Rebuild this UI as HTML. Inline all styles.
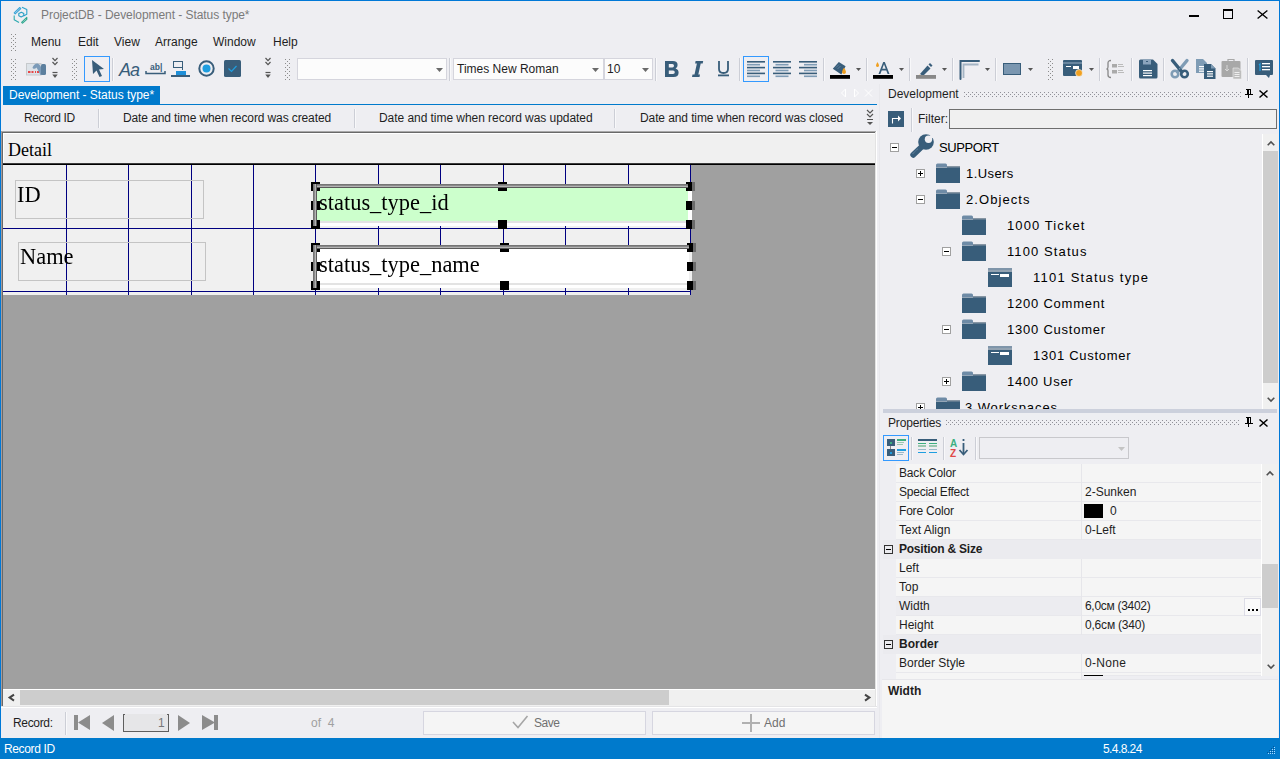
<!DOCTYPE html>
<html><head><meta charset="utf-8">
<style>
*{margin:0;padding:0;box-sizing:border-box}
html,body{width:1280px;height:759px;overflow:hidden;background:#eeeef2;font-family:"Liberation Sans",sans-serif;font-size:12px;color:#1e1e1e}
.a{position:absolute}
.t{position:absolute;white-space:nowrap;line-height:1}
.sx{transform:scaleX(0.935);transform-origin:0 0}
.serif{font-family:"Liberation Serif",serif;color:#000}
.grip{position:absolute;width:6px;background-image:radial-gradient(circle,#8a8a8a 0.6px,transparent 0.9px);background-size:3px 3px}
.sep{position:absolute;width:1px;background:#ccced6;box-shadow:1px 0 #f8f8fa}
.dd{position:absolute;width:5px;height:3px;background:#555;clip-path:polygon(0 0,100% 0,50% 100%)}
.ddc{position:absolute;width:7px;height:4px;background:#6a6a6a;clip-path:polygon(0 0,100% 0,50% 100%)}
svg{position:absolute;overflow:visible}
.vl{position:absolute;top:165px;width:1px;height:130px;background:#000080}
.hl{position:absolute;left:3px;width:688px;height:1px;background:#000080}
.h{position:absolute;width:5px;height:5px;background:#000}
.row{position:absolute;left:896px;width:365px;height:19px;border-bottom:1px solid #e8e8ec;background:#f5f5f5}
.row .n{position:absolute;left:3px;top:3px;white-space:nowrap;line-height:1}
.row .v{position:absolute;left:189px;top:3px;white-space:nowrap;line-height:1}
.row .c{position:absolute;left:185px;top:0;width:1px;height:19px;background:#e6e6ea}
.tree{position:absolute;font-size:13px;letter-spacing:0.6px;color:#000;white-space:nowrap;line-height:1}
.exp{position:absolute;width:9px;height:9px;border:1px solid #a0a0a0;background:#fff}
.exp:before{content:"";position:absolute;left:1px;top:3px;width:5px;height:1px;background:#000}
.exp.p:after{content:"";position:absolute;left:3px;top:1px;width:1px;height:5px;background:#000}
</style></head><body>
<svg width="0" height="0" style="position:absolute"><defs><pattern id="dp" width="4" height="5" patternUnits="userSpaceOnUse"><rect x="0" y="0" width="1" height="1" fill="#909098"/><rect x="0" y="4" width="1" height="1" fill="#909098"/><rect x="2" y="2" width="1" height="1" fill="#909098"/></pattern><pattern id="gp" width="5" height="4" patternUnits="userSpaceOnUse"><rect x="0" y="0" width="1" height="1" fill="#8c8c8c"/><rect x="4" y="0" width="1" height="1" fill="#8c8c8c"/><rect x="2" y="2" width="1" height="1" fill="#8c8c8c"/></pattern></defs></svg>
<!-- window border -->
<div class="a" style="left:0;top:0;width:1280px;height:1px;background:#0078d7"></div>
<div class="a" style="left:0;top:0;width:1px;height:759px;background:#0078d7"></div>
<div class="a" style="left:1279px;top:0;width:1px;height:759px;background:#0078d7"></div>

<!-- app icon -->
<svg style="left:13px;top:6px" width="16" height="18" viewBox="0 0 16 18">
<g fill="none" stroke-width="1.1" stroke-linejoin="round">
<path d="M1.2 6.8 L6.8 1.5 L7.8 2.6 L2.2 7.8Z" stroke="#38a4d8"/>
<path d="M9 1.2 L13.8 3.6 V8.2 L10.5 10" stroke="#2ca4cc"/>
<path d="M5.8 7.6 L8.4 6.2 L10.8 7.5 V9.6 L8.2 11 L5.8 9.7Z" stroke="#2aa0c4"/>
<path d="M1.2 9.5 V13.8 L6 16.6" stroke="#2eaab0"/>
<path d="M8.6 16.4 L13.8 11.4 V13.4 L9.6 17.2Z" stroke="#30a890"/>
</g></svg>
<!-- title -->
<div class="t" style="left:41px;top:9px;color:#7a7a7a;font-size:12px;letter-spacing:-0.06px">ProjectDB - Development - Status type*</div>
<!-- window controls -->
<div class="a" style="left:1189px;top:15px;width:10px;height:2px;background:#000"></div>
<div class="a" style="left:1223px;top:9px;width:10px;height:10px;border:1px solid #000;border-top-width:2px"></div>
<svg style="left:1257px;top:10px" width="11" height="9" viewBox="0 0 11 9"><path d="M0.6 0.4 L10.4 8.6 M10.4 0.4 L0.6 8.6" stroke="#000" stroke-width="1.3"/></svg>

<!-- menu -->
<svg style="left:11px;top:34px" width="5" height="17" shape-rendering="crispEdges"><rect width="5" height="18" fill="url(#gp)"/></svg>
<div class="t" style="left:31px;top:36px">Menu</div>
<div class="t" style="left:78px;top:36px">Edit</div>
<div class="t" style="left:114px;top:36px">View</div>
<div class="t" style="left:155px;top:36px">Arrange</div>
<div class="t" style="left:213px;top:36px">Window</div>
<div class="t" style="left:273px;top:36px">Help</div>

<!-- toolbar -->

<svg style="left:11px;top:59px" width="5" height="21" shape-rendering="crispEdges"><rect width="5" height="22" fill="url(#gp)"/></svg>
<!-- card icon -->
<svg style="left:26px;top:63px" width="21" height="13" viewBox="0 0 21 13">
<rect x="0.5" y="0.5" width="14.5" height="11.5" fill="#dde3e9" stroke="#c6c9cc" stroke-width="1"/>
<path d="M2 9 H4.5 M5.5 9 H7.5 M9 9 H10 M11 9 H13" stroke="#e84545" stroke-width="2"/>
<path d="M6.5 4.5 Q8.5 0.3 11.5 0.5 Q13.5 0.8 15 4 L16 12 H14.5 Q12.5 8 10.5 4.5 Q9 6.5 7 5.5Z" fill="#7c9bb9"/>
<rect x="15" y="1" width="5" height="11" rx="1.5" fill="#5c7f9e"/>
</svg>
<svg style="left:52px;top:57px" width="6" height="22" viewBox="0 0 6 22"><g fill="none" stroke="#555" stroke-width="1.2"><path d="M0.5 1 L3 3.7 L5.5 1 M0.5 5 L3 7.7 L5.5 5"/><path d="M0.5 15.5 H5.5"/></g><path d="M0.3 17.5 H5.7 L3 21Z" fill="#555"/></svg>
<svg style="left:72px;top:59px" width="5" height="21" shape-rendering="crispEdges"><rect width="5" height="22" fill="url(#gp)"/></svg>
<!-- pointer selected -->
<div class="a" style="left:84px;top:56px;width:26px;height:26px;border:1px solid #3399ff;background:#eeeef2"></div>
<svg style="left:91px;top:59px" width="14" height="19" viewBox="0 0 14 19"><path d="M1 1 L13 10 L8 10.5 L11 17 L8.5 18 L5.5 11.5 L2 15Z" fill="#385d7a"/></svg>
<div class="sep" style="left:112px;top:58px;height:23px"></div>
<div class="t" style="left:119px;top:61px;font-size:18px;font-style:italic;color:#385d7a;letter-spacing:-1px">Aa</div>
<svg style="left:145px;top:61px" width="21" height="16" viewBox="0 0 21 16">
<text x="5" y="9" font-family="Liberation Sans" font-weight="bold" font-size="8.5" fill="#385d7a">ab|</text>
<path d="M1 10 V12.5 H20 V10" fill="none" stroke="#385d7a" stroke-width="1.5"/>
</svg>
<svg style="left:171px;top:61px" width="20" height="17" viewBox="0 0 20 17">
<rect x="2.5" y="0.5" width="9" height="6" fill="none" stroke="#385d7a" stroke-width="1"/>
<path d="M11.5 0.5 V9" stroke="#385d7a" stroke-width="1"/>
<rect x="5" y="10" width="10" height="4" fill="#1e8fd8"/>
<rect x="0" y="14" width="19" height="2" fill="#385d7a"/>
</svg>
<svg style="left:198px;top:60px" width="18" height="18" viewBox="0 0 18 18"><circle cx="8.5" cy="8.5" r="7.2" fill="none" stroke="#385d7a" stroke-width="2"/><circle cx="8.5" cy="8.5" r="4" fill="#1e9ee0"/></svg>
<svg style="left:224px;top:60px" width="18" height="18" viewBox="0 0 18 18"><rect x="0" y="0" width="17" height="17" rx="1.5" fill="#385d7a"/><path d="M4.5 8.5 L7.5 11.5 L12.5 6" fill="none" stroke="#1e9ee0" stroke-width="1.2"/></svg>
<svg style="left:265px;top:57px" width="6" height="22" viewBox="0 0 6 22"><g fill="none" stroke="#555" stroke-width="1.2"><path d="M0.5 1 L3 3.7 L5.5 1 M0.5 5 L3 7.7 L5.5 5"/><path d="M0.5 15.5 H5.5"/></g><path d="M0.3 17.5 H5.7 L3 21Z" fill="#555"/></svg>
<svg style="left:285px;top:59px" width="5" height="21" shape-rendering="crispEdges"><rect width="5" height="22" fill="url(#gp)"/></svg>
<!-- combos -->
<div class="a" style="left:297px;top:58px;width:150px;height:22px;background:#fcfcfc;border:1px solid #d5d5dd"></div>
<div class="ddc" style="left:436px;top:68px"></div>
<div class="sep" style="left:449px;top:58px;height:23px"></div>
<div class="a" style="left:453px;top:58px;width:151px;height:22px;background:#fcfcfc;border:1px solid #d5d5dd"></div>
<div class="t" style="left:457px;top:63px">Times New Roman</div>
<div class="ddc" style="left:592px;top:68px"></div>
<div class="a" style="left:604px;top:58px;width:49px;height:22px;background:#fcfcfc;border:1px solid #d5d5dd"></div>
<div class="t" style="left:607px;top:63px">10</div>
<div class="ddc" style="left:642px;top:68px"></div>
<div class="sep" style="left:655px;top:58px;height:23px"></div>
<svg style="left:665px;top:61px" width="14" height="17" viewBox="0 0 14 17"><path fill-rule="evenodd" fill="#385d7a" d="M0 0 H7.8 Q12.6 0 12.6 4 Q12.6 6.6 10.6 7.6 Q13.6 8.6 13.6 11.8 Q13.6 16 8.6 16 H0Z M3.8 3 V6.4 H7.4 Q9 6.4 9 4.7 Q9 3 7.4 3Z M3.8 9.4 V13 H8 Q9.8 13 9.8 11.2 Q9.8 9.4 8 9.4Z"/></svg>
<svg style="left:692px;top:61px" width="12" height="17" viewBox="0 0 12 17"><path fill="#385d7a" d="M3.6 0 H11.2 L10.7 2.6 H8.7 L6.3 13.4 H8 L7.5 16 H0 L0.5 13.4 H2.5 L4.9 2.6 H3.1Z"/></svg>
<svg style="left:717px;top:60px" width="13" height="17" viewBox="0 0 13 17"><path d="M2 1 V9 Q2 13 6.5 13 Q11 13 11 9 V1" fill="none" stroke="#385d7a" stroke-width="1.8"/><rect x="1" y="14.5" width="11" height="1.8" fill="#385d7a"/></svg>
<div class="sep" style="left:739px;top:58px;height:23px"></div>
<div class="a" style="left:743px;top:56px;width:26px;height:26px;border:1px solid #3399ff"></div>
<svg style="left:747px;top:60px" width="18" height="18" viewBox="0 0 18 18"><rect x="0" y="1.00" width="18" height="1.6" fill="#385d7a"/><rect x="0" y="3.90" width="13" height="1.6" fill="#7f9cb5"/><rect x="0" y="6.80" width="18" height="1.6" fill="#385d7a"/><rect x="0" y="9.70" width="13" height="1.6" fill="#7f9cb5"/><rect x="0" y="12.60" width="18" height="1.6" fill="#385d7a"/><rect x="0" y="15.50" width="13" height="1.6" fill="#7f9cb5"/></svg><svg style="left:773px;top:60px" width="18" height="18" viewBox="0 0 18 18"><rect x="0" y="1.00" width="18" height="1.6" fill="#385d7a"/><rect x="2.5" y="3.90" width="13" height="1.6" fill="#7f9cb5"/><rect x="0" y="6.80" width="18" height="1.6" fill="#385d7a"/><rect x="2.5" y="9.70" width="13" height="1.6" fill="#7f9cb5"/><rect x="0" y="12.60" width="18" height="1.6" fill="#385d7a"/><rect x="2.5" y="15.50" width="13" height="1.6" fill="#7f9cb5"/></svg><svg style="left:799px;top:60px" width="18" height="18" viewBox="0 0 18 18"><rect x="0" y="1.00" width="18" height="1.6" fill="#385d7a"/><rect x="5" y="3.90" width="13" height="1.6" fill="#7f9cb5"/><rect x="0" y="6.80" width="18" height="1.6" fill="#385d7a"/><rect x="5" y="9.70" width="13" height="1.6" fill="#7f9cb5"/><rect x="0" y="12.60" width="18" height="1.6" fill="#385d7a"/><rect x="5" y="15.50" width="13" height="1.6" fill="#7f9cb5"/></svg><div class="sep" style="left:823px;top:58px;height:23px"></div>
<svg style="left:830px;top:61px" width="22" height="18" viewBox="0 0 22 18">
<path d="M2.8 7.8 L8.8 0.9 L15.6 5.3 L11.3 13.4Z" fill="#385d7a"/>
<path d="M6 6.5 L9 3.5 M7.5 8 L10.5 5" stroke="#6f8fab" stroke-width="0.7"/>
<path d="M14 6.8 Q12 9.5 12 11 Q12.2 13 14 13 Q15.8 13 16 11 Q16 9.5 14 6.8Z" fill="#f0a020"/>
<rect x="0" y="14" width="20" height="3.8" fill="#000"/>
</svg>
<div class="dd" style="left:856px;top:68px"></div>
<div class="sep" style="left:866px;top:58px;height:23px"></div>
<svg style="left:873px;top:61px" width="22" height="18" viewBox="0 0 22 18">
<path d="M5.5 13 L10.2 1 H11.8 L16.5 13 H14.6 L13.3 9.5 H8.7 L7.4 13Z M9.3 7.8 H12.7 L11 3.2Z" fill="#385d7a"/>
<path d="M4.5 1 Q3 3.5 3 4.5 Q3.2 6 4.5 6 Q5.8 6 6 4.5 Q6 3.5 4.5 1Z" fill="#f0a020"/>
<rect x="0" y="14" width="20" height="3.8" fill="#000"/>
</svg>
<div class="dd" style="left:899px;top:68px"></div>
<div class="sep" style="left:909px;top:58px;height:23px"></div>
<svg style="left:915px;top:62px" width="21" height="17" viewBox="0 0 21 17">
<path d="M5 12 L12.5 3.5 L15.5 6.5 L8 14Z" fill="#385d7a"/>
<path d="M13.5 2.5 L15 1 L17.5 3.5 L16 5Z" fill="#385d7a"/>
<path d="M4.5 12.5 L3.5 14.5 L6 14Z" fill="#f0a020"/>
<rect x="1" y="13" width="20" height="3.8" fill="#888"/>
</svg>
<div class="dd" style="left:942px;top:68px"></div>
<div class="sep" style="left:952px;top:58px;height:23px"></div>
<svg style="left:959px;top:59px" width="21" height="21" viewBox="0 0 21 21">
<path d="M1.5 20 V2 H20" fill="none" stroke="#385d7a" stroke-width="2" stroke-linecap="round"/>
<path d="M4.5 19 V5.5 H19.5" fill="none" stroke="#a4b4c4" stroke-width="1.8"/>
</svg>
<div class="dd" style="left:985px;top:68px"></div>
<div class="sep" style="left:995px;top:58px;height:23px"></div>
<div class="a" style="left:1003px;top:63px;width:18px;height:12px;background:#7a96b0;border:1.5px solid #385d7a"></div>
<div class="dd" style="left:1028px;top:68px"></div>
<svg style="left:1048px;top:59px" width="5" height="21" shape-rendering="crispEdges"><rect width="5" height="22" fill="url(#gp)"/></svg>
<svg style="left:1063px;top:60px" width="21" height="17" viewBox="0 0 21 17">
<rect x="0" y="0" width="19" height="16" rx="1" fill="#385d7a"/>
<rect x="0" y="2.5" width="19" height="1" fill="#9ab0c4"/>
<rect x="3" y="6" width="5" height="1" fill="#fff"/><rect x="10" y="6" width="6" height="3" fill="#fff"/>
<circle cx="16" cy="13" r="3.5" fill="#f0a020" stroke="#fff" stroke-width="0.6"/>
</svg>
<div class="dd" style="left:1089px;top:68px"></div>
<div class="sep" style="left:1099px;top:58px;height:23px"></div>
<svg style="left:1106px;top:59px" width="19" height="20" viewBox="0 0 19 20">
<path d="M5 1.5 Q2 1.5 2 4 V8 Q2 10 0.5 10 Q2 10 2 12 V16 Q2 18.5 5 18.5" fill="none" stroke="#888" stroke-width="1.3"/>
<rect x="6" y="5" width="5" height="3.5" fill="#aaa"/><rect x="12" y="5" width="5" height="1" fill="#bbb"/><rect x="12" y="7" width="6" height="1" fill="#bbb"/>
<rect x="6" y="11" width="5" height="3.5" fill="#aaa"/><rect x="12" y="11" width="5" height="1" fill="#bbb"/><rect x="12" y="13" width="6" height="1" fill="#bbb"/>
</svg>
<div class="sep" style="left:1131px;top:58px;height:23px"></div>
<svg style="left:1138px;top:59px" width="20" height="20" viewBox="0 0 20 20">
<path d="M1 2 Q1 0.5 2.5 0.5 H15 L19.5 5 V18 Q19.5 19.5 18 19.5 H2.5 Q1 19.5 1 18Z" fill="#385d7a"/>
<rect x="5" y="0.5" width="8" height="5" fill="#8aa4bc"/><rect x="8" y="2" width="2" height="1" fill="#385d7a"/>
<rect x="5" y="11" width="9" height="1.2" fill="#fff"/><rect x="5" y="13.5" width="9" height="1.2" fill="#fff"/><rect x="5" y="16" width="9" height="1.2" fill="#fff"/>
</svg>
<div class="sep" style="left:1163px;top:58px;height:23px"></div>
<svg style="left:1170px;top:59px" width="20" height="20" viewBox="0 0 20 20">
<path d="M17 1.5 L7.5 13" stroke="#7f9cb5" stroke-width="3.4" stroke-linecap="round"/>
<path d="M2.5 1.5 L12 13" stroke="#385d7a" stroke-width="3.4" stroke-linecap="round"/>
<circle cx="9.7" cy="9.8" r="0.8" fill="#7f9cb5"/>
<circle cx="5" cy="15" r="3.3" fill="none" stroke="#7f9cb5" stroke-width="2.6"/>
<circle cx="14.5" cy="15" r="3.3" fill="none" stroke="#385d7a" stroke-width="2.6"/>
</svg>
<svg style="left:1196px;top:59px" width="20" height="20" viewBox="0 0 20 20">
<path d="M0 0 H7 L11 4 V14 H0Z" fill="#7f9cb5"/>
<rect x="3" y="7" width="5" height="1.2" fill="#fff"/><rect x="3" y="9.3" width="5" height="1.2" fill="#fff"/><rect x="3" y="11.6" width="5" height="1.2" fill="#fff"/>
<path d="M8 5 H15 L19.5 9.5 V20 H8Z" fill="#385d7a"/>
<path d="M15 5 L19.5 9.5 H15Z" fill="#7f9cb5"/>
<rect x="11" y="12" width="6" height="1.2" fill="#fff"/><rect x="11" y="14.3" width="6" height="1.2" fill="#fff"/><rect x="11" y="16.6" width="6" height="1.2" fill="#fff"/>
</svg>
<svg style="left:1221px;top:59px" width="21" height="20" viewBox="0 0 21 20">
<rect x="0.5" y="2" width="19" height="16" rx="1" fill="#a8a8a8"/>
<path d="M7 2 V0.5 H13 V2" fill="none" stroke="#a8a8a8" stroke-width="1.2"/>
<path d="M6 6 V12 M4 10 L6 12 L8 10" fill="none" stroke="#d8d8d8" stroke-width="1"/>
<path d="M12 9 H17.5 L20.5 12 V20 H12Z" fill="#bdbdbd" stroke="#eee" stroke-width="0.6"/>
<rect x="13.5" y="13" width="5" height="1" fill="#eee"/><rect x="13.5" y="15" width="5" height="1" fill="#eee"/><rect x="13.5" y="17" width="5" height="1" fill="#eee"/>
</svg>
<div class="sep" style="left:1247px;top:58px;height:23px"></div>
<svg style="left:1254px;top:60px" width="20" height="19" viewBox="0 0 20 19">
<path d="M1 1 Q1 0 2 0 H18 Q19 0 19 1 V14 Q19 15 18 15 H16 L15 18 L12 15 H2 Q1 15 1 14Z" fill="#385d7a"/>
<path d="M5 5 L6 4 V11" fill="none" stroke="#1e9ee0" stroke-width="1.2"/>
<rect x="8" y="3" width="8" height="1.3" fill="#fff"/><rect x="8" y="6" width="8" height="1.3" fill="#fff"/><rect x="8" y="9" width="8" height="1.3" fill="#fff"/>
</svg>


<!-- tab -->
<div class="a" style="left:3px;top:86px;width:157px;height:18px;background:#007acc"></div>
<div class="t" style="left:9px;top:89px;color:#fff;letter-spacing:-0.04px">Development - Status type*</div>
<div class="a" style="left:3px;top:104px;width:874px;height:1px;background:#007acc"></div>
<svg style="left:840px;top:88px" width="32" height="10" viewBox="0 0 32 10"><g fill="none" stroke="#fff" stroke-width="1"><path d="M5.5 1 L1.5 5 L5.5 9Z"/><path d="M14.5 1 L18.5 5 L14.5 9Z"/><path d="M25 1.5 L32 8.5 M32 1.5 L25 8.5"/></g></svg>

<!-- header row -->
<div class="t" style="left:24px;top:112px;letter-spacing:-0.37px">Record ID</div>
<div class="sep" style="left:98px;top:109px;height:19px"></div>
<div class="t" style="left:123px;top:112px;letter-spacing:-0.11px">Date and time when record was created</div>
<div class="sep" style="left:354px;top:109px;height:19px"></div>
<div class="t" style="left:379px;top:112px;letter-spacing:-0.05px">Date and time when record was updated</div>
<div class="sep" style="left:614px;top:109px;height:19px"></div>
<div class="t" style="left:640px;top:112px;letter-spacing:-0.1px">Date and time when record was closed</div>
<svg style="left:866px;top:109px" width="8" height="17" viewBox="0 0 8 17"><g fill="none" stroke="#555" stroke-width="1.2"><path d="M1 1 L4 4 L7 1 M1 5 L4 8 L7 5"/></g><path d="M1 10.5 H7" stroke="#555"/><path d="M1 13 H7 L4 16Z" fill="#555"/></svg>

<!-- design surface -->
<div class="a" style="left:1px;top:131px;width:875px;height:1px;background:#a9a9a9"></div>
<div class="a" style="left:1px;top:131px;width:1px;height:576px;background:#a49c9c"></div>
<div class="a" style="left:2px;top:132px;width:873px;height:1px;background:#696969"></div>
<div class="a" style="left:2px;top:132px;width:1px;height:575px;background:#696969"></div>
<div class="a" style="left:875px;top:132px;width:1px;height:575px;background:#e3e3e3"></div>
<div class="a" style="left:876px;top:131px;width:1px;height:576px;background:#fff"></div>
<div class="a" style="left:3px;top:133px;width:872px;height:556px;background:#a0a0a0"></div>
<div class="a" style="left:3px;top:133px;width:872px;height:31px;background:#f0f0f0"></div>
<div class="a" style="left:3px;top:133px;width:872px;height:1px;background:#fff"></div><div class="a" style="left:3px;top:133px;width:1px;height:30px;background:#fff"></div>
<div class="t serif" style="left:8px;top:141px;font-size:18px">Detail</div>
<div class="a" style="left:3px;top:163px;width:872px;height:2px;background:linear-gradient(#3c3c3c 50%,#000 50%)"></div>
<div class="a" style="left:3px;top:165px;width:688px;height:130px;background:#f0f0f0"></div>
<div class="vl" style="left:66px"></div>
<div class="vl" style="left:128px"></div>
<div class="vl" style="left:191px"></div>
<div class="vl" style="left:253px"></div>
<div class="vl" style="left:315px"></div>
<div class="vl" style="left:378px"></div>
<div class="vl" style="left:440px"></div>
<div class="vl" style="left:503px"></div>
<div class="vl" style="left:565px"></div>
<div class="vl" style="left:628px"></div>
<div class="vl" style="left:690px"></div>
<div class="hl" style="top:228px"></div>
<div class="hl" style="top:291px"></div>
<!-- labels -->
<div class="a" style="left:15px;top:180px;width:189px;height:39px;border:1px solid #c4c4c4"></div>
<div class="t serif sx" style="left:16.5px;top:182px;font-size:24px">ID</div>
<div class="a" style="left:18px;top:242px;width:188px;height:39px;border:1px solid #c4c4c4"></div>
<div class="t serif sx" style="left:19.5px;top:244px;font-size:24px">Name</div>
<!-- textbox 1 -->
<div class="a" style="left:317px;top:188px;width:371px;height:33px;background:#ccffcc"></div>
<div class="a" style="left:317px;top:221px;width:371px;height:2px;background:#e3e3e3"></div>
<div class="a" style="left:317px;top:223px;width:371px;height:3px;background:#fff"></div>
<div class="a" style="left:688px;top:188px;width:4px;height:38px;background:#fff"></div>
<div class="t serif sx" style="left:319px;top:190px;font-size:24px">status_type_id</div>
<div class="h" style="left:311px;top:182px;width:9px;height:9px"></div>
<div class="h" style="left:311px;top:201px;width:9px;height:9px"></div>
<div class="h" style="left:311px;top:220px;width:9px;height:9px"></div>
<div class="h" style="left:498px;top:182px;width:9px;height:9px"></div>
<div class="h" style="left:498px;top:220px;width:9px;height:9px"></div>
<div class="h" style="left:686px;top:182px;width:6px;height:9px"></div>
<div class="a" style="left:692px;top:182px;width:3px;height:9px;background:#6a6a6a"></div>
<div class="h" style="left:686px;top:201px;width:6px;height:9px"></div>
<div class="a" style="left:692px;top:201px;width:3px;height:9px;background:#6a6a6a"></div>
<div class="h" style="left:686px;top:220px;width:6px;height:9px"></div>
<div class="a" style="left:692px;top:220px;width:3px;height:9px;background:#6a6a6a"></div>
<div class="a" style="left:313px;top:184px;width:375px;height:4px;background:linear-gradient(#757575 0,#757575 25%,#8a8a8a 25%,#8a8a8a 50%,#b4b4b4 50%,#b4b4b4 75%,#5a5a5a 75%)"></div>
<div class="a" style="left:313px;top:184px;width:4px;height:42px;background:linear-gradient(90deg,#757575 0,#757575 25%,#8a8a8a 25%,#8a8a8a 50%,#b4b4b4 50%,#b4b4b4 75%,#5a5a5a 75%)"></div>
<!-- textbox 2 -->
<div class="a" style="left:317px;top:249px;width:375px;height:34px;background:#fff"></div>
<div class="a" style="left:317px;top:283px;width:372px;height:2px;background:#e3e3e3"></div>
<div class="a" style="left:317px;top:285px;width:375px;height:3px;background:#fff"></div>
<div class="a" style="left:689px;top:249px;width:3px;height:39px;background:#f0f0f0"></div>
<div class="t serif sx" style="left:319px;top:252px;font-size:24px">status_type_name</div>
<div class="h" style="left:311px;top:243px;width:9px;height:9px"></div>
<div class="h" style="left:311px;top:262px;width:9px;height:9px"></div>
<div class="h" style="left:311px;top:281px;width:9px;height:9px"></div>
<div class="h" style="left:500px;top:243px;width:9px;height:9px"></div>
<div class="h" style="left:500px;top:281px;width:9px;height:9px"></div>
<div class="h" style="left:687px;top:243px;width:6px;height:9px"></div>
<div class="a" style="left:693px;top:243px;width:3px;height:9px;background:#6a6a6a"></div>
<div class="h" style="left:687px;top:262px;width:6px;height:9px"></div>
<div class="a" style="left:693px;top:262px;width:3px;height:9px;background:#6a6a6a"></div>
<div class="h" style="left:687px;top:281px;width:6px;height:9px"></div>
<div class="a" style="left:693px;top:281px;width:3px;height:9px;background:#6a6a6a"></div>
<div class="a" style="left:313px;top:245px;width:376px;height:4px;background:linear-gradient(#757575 0,#757575 25%,#8a8a8a 25%,#8a8a8a 50%,#b4b4b4 50%,#b4b4b4 75%,#5a5a5a 75%)"></div>
<div class="a" style="left:313px;top:245px;width:4px;height:43px;background:linear-gradient(90deg,#757575 0,#757575 25%,#8a8a8a 25%,#8a8a8a 50%,#b4b4b4 50%,#b4b4b4 75%,#5a5a5a 75%)"></div>

<!-- h scrollbar -->
<div class="a" style="left:3px;top:689px;width:872px;height:18px;background:#f0f0f0;border-top:1px solid #fff"></div>
<div class="a" style="left:20px;top:690px;width:649px;height:15px;background:#cdcdcd"></div>
<svg style="left:8px;top:694px" width="7" height="8" viewBox="0 0 7 8"><path d="M6 0.6 L1.6 3.6 L6 6.6" fill="none" stroke="#454545" stroke-width="2"/></svg>
<svg style="left:864px;top:694px" width="7" height="8" viewBox="0 0 7 8"><path d="M1 0.6 L5.4 3.6 L1 6.6" fill="none" stroke="#454545" stroke-width="2"/></svg>

<div class="a" style="left:1px;top:706px;width:876px;height:1px;background:#e4e4e6"></div><div class="a" style="left:1px;top:707px;width:876px;height:1px;background:#fff"></div>
<!-- record bar -->
<div class="t" style="left:13px;top:717px;letter-spacing:-0.33px">Record:</div>
<div class="sep" style="left:65px;top:712px;height:23px"></div>
<div class="a" style="left:74px;top:715px;width:4px;height:15px;background:#8c8c8c"></div>
<svg style="left:78px;top:715px" width="12" height="15" viewBox="0 0 12 15"><path d="M12 0 L0 7.5 L12 15Z" fill="#8c8c8c"/></svg>
<svg style="left:102px;top:715px" width="12" height="16" viewBox="0 0 12 16"><path d="M12 0 L0 8 L12 16Z" fill="#8c8c8c"/></svg>
<div class="a" style="left:123px;top:714px;width:46px;height:18px;background:#e6e6e8;border:1px solid #5e5e5e;border-top-color:#e6e6e8"></div><div class="a" style="left:123px;top:714px;width:2px;height:1px;background:#5e5e5e"></div><div class="a" style="left:167px;top:714px;width:2px;height:1px;background:#5e5e5e"></div>
<div class="t" style="left:158px;top:717px;color:#777">1</div>
<svg style="left:178px;top:715px" width="12" height="16" viewBox="0 0 12 16"><path d="M0 0 L12 8 L0 16Z" fill="#8c8c8c"/></svg>
<svg style="left:202px;top:715px" width="13" height="15" viewBox="0 0 13 15"><path d="M0 0 L13 7.5 L0 15Z" fill="#8c8c8c"/></svg>
<div class="a" style="left:214px;top:715px;width:4px;height:15px;background:#8c8c8c"></div>
<div class="t" style="left:311px;top:717px;color:#a0a0a0">of&nbsp; 4</div>
<div class="a" style="left:423px;top:711px;width:223px;height:24px;background:#f5f5f5;border:1px solid #d6d6e0"></div>
<svg style="left:512px;top:715px" width="16" height="14" viewBox="0 0 16 14"><path d="M1 7 L6 12.5 L15.5 1" fill="none" stroke="#a6a6a6" stroke-width="1.6"/></svg>
<div class="t" style="left:534px;top:717px;color:#707070;letter-spacing:-0.5px">Save</div>
<div class="a" style="left:652px;top:711px;width:223px;height:24px;background:#f5f5f5;border:1px solid #d6d6e0"></div>
<div class="a" style="left:750px;top:714px;width:2px;height:18px;background:#b0b0b0"></div>
<div class="a" style="left:742px;top:722px;width:18px;height:2px;background:#b0b0b0"></div>
<div class="t" style="left:764px;top:717px;color:#707070">Add</div>

<!-- right panel -->

<div class="a" style="left:879px;top:84px;width:1px;height:654px;background:#e8e8ec"></div>
<div class="t" style="left:888px;top:88px;color:#1e1e1e">Development</div>
<svg style="left:964px;top:92px" width="276" height="5" shape-rendering="crispEdges"><rect width="277" height="5" fill="url(#dp)"/></svg>
<svg style="left:1245px;top:89px" width="8" height="9" viewBox="0 0 8 9" shape-rendering="crispEdges"><rect x="1" y="0" width="5" height="1" fill="#000"/><rect x="2" y="0" width="1" height="5" fill="#000"/><rect x="5" y="0" width="1" height="5" fill="#000"/><rect x="0" y="5" width="8" height="1" fill="#000"/><rect x="3" y="6" width="1" height="3" fill="#000"/><rect x="3" y="1" width="1" height="4" fill="#000"/></svg>
<svg style="left:1259px;top:90px" width="9" height="8" viewBox="0 0 9 8"><path d="M0.5 0.5 L8.5 7.5 M8.5 0.5 L0.5 7.5" stroke="#000" stroke-width="1.5"/></svg>
<div class="a" style="left:888px;top:111px;width:16px;height:16px;background:#385d7a"></div>
<svg style="left:891px;top:114px" width="11" height="10" viewBox="0 0 11 10"><path d="M1.5 9.5 V4.5 H8" fill="none" stroke="#fff" stroke-width="1.1"/><path d="M7 1.5 L10 4.5 L7 7.5Z" fill="#fff"/></svg>
<div class="sep" style="left:911px;top:108px;height:24px"></div>
<div class="t" style="left:918px;top:113px;color:#1e1e1e">Filter:</div>
<div class="a" style="left:949px;top:109px;width:328px;height:20px;background:#f0f0f0;border:1px solid #6e6e6e"></div>

<!-- tree -->
<div class="a" style="left:1262px;top:134px;width:1px;height:275px;background:#fff"></div>
<div class="a" style="left:1263px;top:134px;width:15px;height:275px;background:#f0f0f0"></div>
<div class="a" style="left:1263px;top:151px;width:15px;height:232px;background:#cdcdcd"></div>
<svg style="left:1267px;top:140px" width="8" height="6" viewBox="0 0 8 6"><path d="M0.7 5.3 L4 2 L7.3 5.3" fill="none" stroke="#505050" stroke-width="1.6"/></svg>
<svg style="left:1267px;top:397px" width="8" height="6" viewBox="0 0 8 6"><path d="M0.7 0.7 L4 4 L7.3 0.7" fill="none" stroke="#505050" stroke-width="1.6"/></svg>
<div style="position:absolute;left:880px;top:134px;width:382px;height:275px;overflow:hidden">
<div style="position:absolute;left:-880px;top:-134px;width:1280px;height:759px">
<div class="exp" style="left:890px;top:143px"></div>
<svg style="left:908px;top:133px" width="27" height="27" viewBox="0 0 27 27">
<defs><mask id="wm"><rect x="-2" y="-2" width="31" height="31" fill="#fff"/><circle cx="20.5" cy="6.2" r="3.7" fill="#000"/><path d="M20.5 6.2 L25 -3 L31 3Z" fill="#000"/></mask></defs>
<g mask="url(#wm)" fill="#385d7a"><circle cx="18" cy="9" r="7.8"/></g>
<path d="M15 12.5 L5.2 21.8" stroke="#385d7a" stroke-width="5.8" stroke-linecap="round"/>
<path d="M4.5 21 L10 15.5" stroke="#7f9cb5" stroke-width="0.8" stroke-dasharray="1.2 0.6"/>
</svg>
<div class="tree" style="left:939px;top:141px;letter-spacing:-0.4px">SUPPORT</div>
<div class="exp p" style="left:916px;top:169px"></div><svg style="left:936px;top:163px" width="24" height="20" viewBox="0 0 24 20"><path d="M0 2 Q0 0.5 1.5 0.5 H9.5 Q11 0.5 11 2 V4 H0Z" fill="#6e8ba6"/><rect x="11" y="3" width="13" height="2" fill="#8796a4"/><rect x="0" y="4.5" width="24" height="15.5" fill="#385d7a"/></svg><div class="tree" style="left:966px;top:167px;letter-spacing:0.43px">1.Users</div>
<div class="exp" style="left:916px;top:195px"></div><svg style="left:936px;top:189px" width="24" height="20" viewBox="0 0 24 20"><path d="M0 2 Q0 0.5 1.5 0.5 H9.5 Q11 0.5 11 2 V4 H0Z" fill="#6e8ba6"/><rect x="11" y="3" width="13" height="2" fill="#8796a4"/><rect x="0" y="4.5" width="24" height="15.5" fill="#385d7a"/></svg><div class="tree" style="left:966px;top:193px;letter-spacing:1.07px">2.Objects</div>
<svg style="left:962px;top:215px" width="24" height="20" viewBox="0 0 24 20"><path d="M0 2 Q0 0.5 1.5 0.5 H9.5 Q11 0.5 11 2 V4 H0Z" fill="#6e8ba6"/><rect x="11" y="3" width="13" height="2" fill="#8796a4"/><rect x="0" y="4.5" width="24" height="15.5" fill="#385d7a"/></svg><div class="tree" style="left:1007px;top:219px;letter-spacing:1.1px">1000 Ticket</div>
<div class="exp" style="left:942px;top:247px"></div><svg style="left:962px;top:241px" width="24" height="20" viewBox="0 0 24 20"><path d="M0 2 Q0 0.5 1.5 0.5 H9.5 Q11 0.5 11 2 V4 H0Z" fill="#6e8ba6"/><rect x="11" y="3" width="13" height="2" fill="#8796a4"/><rect x="0" y="4.5" width="24" height="15.5" fill="#385d7a"/></svg><div class="tree" style="left:1007px;top:245px;letter-spacing:1.1px">1100 Status</div>
<svg style="left:988px;top:267px" width="24" height="20" viewBox="0 0 24 20" shape-rendering="crispEdges"><rect x="0" y="1" width="24" height="19" fill="#385d7a"/><rect x="0" y="1" width="24" height="2" fill="#7f95aa"/><rect x="0" y="3" width="24" height="2" fill="#93a3b2"/><rect x="3" y="7" width="8" height="1" fill="#fff"/><rect x="12" y="7" width="9" height="3" fill="#fff"/></svg><div class="tree" style="left:1033px;top:271px;letter-spacing:1.23px">1101 Status type</div>
<svg style="left:962px;top:293px" width="24" height="20" viewBox="0 0 24 20"><path d="M0 2 Q0 0.5 1.5 0.5 H9.5 Q11 0.5 11 2 V4 H0Z" fill="#6e8ba6"/><rect x="11" y="3" width="13" height="2" fill="#8796a4"/><rect x="0" y="4.5" width="24" height="15.5" fill="#385d7a"/></svg><div class="tree" style="left:1007px;top:297px;letter-spacing:0.78px">1200 Comment</div>
<div class="exp" style="left:942px;top:325px"></div><svg style="left:962px;top:319px" width="24" height="20" viewBox="0 0 24 20"><path d="M0 2 Q0 0.5 1.5 0.5 H9.5 Q11 0.5 11 2 V4 H0Z" fill="#6e8ba6"/><rect x="11" y="3" width="13" height="2" fill="#8796a4"/><rect x="0" y="4.5" width="24" height="15.5" fill="#385d7a"/></svg><div class="tree" style="left:1007px;top:323px;letter-spacing:0.77px">1300 Customer</div>
<svg style="left:988px;top:345px" width="24" height="20" viewBox="0 0 24 20" shape-rendering="crispEdges"><rect x="0" y="1" width="24" height="19" fill="#385d7a"/><rect x="0" y="1" width="24" height="2" fill="#7f95aa"/><rect x="0" y="3" width="24" height="2" fill="#93a3b2"/><rect x="3" y="7" width="8" height="1" fill="#fff"/><rect x="12" y="7" width="9" height="3" fill="#fff"/></svg><div class="tree" style="left:1033px;top:349px;letter-spacing:0.73px">1301 Customer</div>
<div class="exp p" style="left:942px;top:377px"></div><svg style="left:962px;top:371px" width="24" height="20" viewBox="0 0 24 20"><path d="M0 2 Q0 0.5 1.5 0.5 H9.5 Q11 0.5 11 2 V4 H0Z" fill="#6e8ba6"/><rect x="11" y="3" width="13" height="2" fill="#8796a4"/><rect x="0" y="4.5" width="24" height="15.5" fill="#385d7a"/></svg><div class="tree" style="left:1007px;top:375px;letter-spacing:0.71px">1400 User</div>
<div class="exp p" style="left:916px;top:403px"></div><svg style="left:936px;top:397px" width="24" height="20" viewBox="0 0 24 20"><path d="M0 2 Q0 0.5 1.5 0.5 H9.5 Q11 0.5 11 2 V4 H0Z" fill="#6e8ba6"/><rect x="11" y="3" width="13" height="2" fill="#8796a4"/><rect x="0" y="4.5" width="24" height="15.5" fill="#385d7a"/></svg><div class="tree" style="left:965px;top:401px;letter-spacing:0.9px">3.Workspaces</div>
</div></div>
<div class="a" style="left:883px;top:409px;width:394px;height:4px;background:#ccd0dc"></div>

<!-- properties -->
<div class="t" style="left:888px;top:417px;color:#1e1e1e;letter-spacing:-0.15px">Properties</div>
<svg style="left:946px;top:420px" width="294" height="5" shape-rendering="crispEdges"><rect width="294" height="5" fill="url(#dp)"/></svg>
<svg style="left:1245px;top:417px" width="8" height="10" viewBox="0 0 8 10" shape-rendering="crispEdges"><rect x="1" y="0" width="5" height="1" fill="#000"/><rect x="2" y="0" width="1" height="6" fill="#000"/><rect x="5" y="0" width="1" height="6" fill="#000"/><rect x="0" y="6" width="8" height="1" fill="#000"/><rect x="3" y="7" width="1" height="3" fill="#000"/><rect x="3" y="1" width="1" height="5" fill="#000"/></svg>
<svg style="left:1259px;top:419px" width="9" height="8" viewBox="0 0 9 8"><path d="M0.5 0.5 L8.5 7.5 M8.5 0.5 L0.5 7.5" stroke="#000" stroke-width="1.5"/></svg>
<div class="a" style="left:883px;top:435px;width:26px;height:26px;border:1px solid #3399ff"></div>
<svg style="left:886px;top:438px" width="20" height="20" viewBox="0 0 20 20" shape-rendering="crispEdges">
<rect x="1" y="1" width="8" height="7" fill="#385d7a"/><rect x="1" y="11" width="8" height="7" fill="#385d7a"/>
<rect x="4" y="4" width="2" height="2" fill="#3cb080"/><rect x="4" y="14" width="2" height="2" fill="#1e9ee0"/>
<rect x="4" y="8" width="1" height="3" fill="#888"/>
<rect x="11" y="1" width="9" height="1.5" fill="#3cb080"/><rect x="11" y="4" width="7" height="1" fill="#9ac8b0"/><rect x="11" y="6" width="6" height="1" fill="#9ac8b0"/>
<rect x="11" y="11" width="9" height="1.5" fill="#1e9ee0"/><rect x="11" y="14" width="7" height="1" fill="#9ab8c8"/><rect x="11" y="16" width="6" height="1" fill="#9ab8c8"/>
</svg>
<div class="sep" style="left:911px;top:437px;height:23px"></div>
<svg style="left:918px;top:438px" width="20" height="18" viewBox="0 0 20 18" shape-rendering="crispEdges">
<rect x="0" y="1" width="19" height="1.5" fill="#385d7a"/>
<rect x="0" y="5" width="8" height="1" fill="#3cb080"/><rect x="11" y="5" width="8" height="1" fill="#3cb080"/>
<rect x="0" y="7" width="8" height="1.5" fill="#9ac8b0"/><rect x="11" y="7" width="8" height="1.5" fill="#9ac8b0"/>
<rect x="0" y="11" width="8" height="1" fill="#9ab8c8"/><rect x="11" y="11" width="8" height="1" fill="#9ab8c8"/>
<rect x="0" y="13.5" width="8" height="1.5" fill="#1e9ee0"/><rect x="11" y="13.5" width="8" height="1.5" fill="#1e9ee0"/>
</svg>
<div class="sep" style="left:943px;top:437px;height:23px"></div>
<svg style="left:950px;top:438px" width="19" height="20" viewBox="0 0 19 20">
<text x="0" y="8.5" font-family="Liberation Sans" font-weight="bold" font-size="10" fill="#3cb080">A</text>
<text x="0" y="18.5" font-family="Liberation Sans" font-weight="bold" font-size="10" fill="#e04848">Z</text>
<path d="M13.5 1 V3 M13.5 5 V16" stroke="#385d7a" stroke-width="1.8"/><path d="M9.5 12 L13.5 16.5 L17.5 12" fill="none" stroke="#385d7a" stroke-width="1.8"/>
</svg>
<div class="sep" style="left:975px;top:437px;height:23px"></div>
<div class="a" style="left:979px;top:437px;width:150px;height:22px;border:1px solid #c8c8cc"></div>
<div class="ddc" style="left:1118px;top:447px;background:#c4c4c4"></div>

<!-- grid -->
<div class="a" style="left:883px;top:464px;width:13px;height:212px;background:#eeeef2"></div>
<div class="row" style="top:464px;height:19px"><div class="a" style="left:0;top:0;width:185px;height:18px;background:#f5f5f5"></div><div class="n" style="letter-spacing:-0.18px">Back Color</div><div class="c"></div><div class="v"></div></div>
<div class="row" style="top:483px;height:19px"><div class="a" style="left:0;top:0;width:185px;height:18px;background:#f5f5f5"></div><div class="n" style="letter-spacing:-0.23px">Special Effect</div><div class="c"></div><div class="v">2-Sunken</div></div>
<div class="row" style="top:502px;height:19px"><div class="a" style="left:0;top:0;width:185px;height:18px;background:#f5f5f5"></div><div class="n" style="letter-spacing:-0.19px">Fore Color</div><div class="c"></div><div class="a" style="left:188px;top:2px;width:19px;height:14px;background:#000"></div><div class="v" style="left:214px">0</div></div>
<div class="row" style="top:521px;height:19px"><div class="a" style="left:0;top:0;width:185px;height:18px;background:#f5f5f5"></div><div class="n">Text Align</div><div class="c"></div><div class="v">0-Left</div></div>
<div class="a" style="left:883px;top:540px;width:379px;height:19px;background:#ebebef"></div>
<div class="exp" style="left:884px;top:545px;border-color:#333;background:transparent"></div>
<div class="t" style="left:899px;top:543px;font-weight:bold;color:#1e1e1e;letter-spacing:-0.24px">Position &amp; Size</div>
<div class="row" style="top:559px;height:19px"><div class="a" style="left:0;top:0;width:185px;height:18px;background:#f5f5f5"></div><div class="n">Left</div><div class="c"></div><div class="v"></div></div>
<div class="row" style="top:578px;height:19px"><div class="a" style="left:0;top:0;width:185px;height:18px;background:#f5f5f5"></div><div class="n">Top</div><div class="c"></div><div class="v"></div></div>
<div class="row" style="top:597px;height:19px"><div class="a" style="left:0;top:0;width:185px;height:18px;background:#ececf0"></div><div class="n">Width</div><div class="c"></div><div class="v" style="letter-spacing:-0.3px">6,0см (3402)</div></div>
<div class="a" style="left:1244px;top:598px;width:17px;height:18px;background:#fafafa;border:1px solid #dcdce6"></div><div class="a" style="left:1248px;top:609px;width:2px;height:2px;background:#000"></div><div class="a" style="left:1252px;top:609px;width:2px;height:2px;background:#000"></div><div class="a" style="left:1256px;top:609px;width:2px;height:2px;background:#000"></div>
<div class="row" style="top:616px;height:19px"><div class="a" style="left:0;top:0;width:185px;height:18px;background:#f5f5f5"></div><div class="n">Height</div><div class="c"></div><div class="v" style="letter-spacing:-0.2px">0,6см (340)</div></div>
<div class="a" style="left:883px;top:635px;width:379px;height:19px;background:#ebebef"></div>
<div class="exp" style="left:884px;top:640px;border-color:#333;background:transparent"></div>
<div class="t" style="left:899px;top:638px;font-weight:bold;color:#1e1e1e">Border</div>
<div class="row" style="top:654px;height:19px"><div class="a" style="left:0;top:0;width:185px;height:18px;background:#f5f5f5"></div><div class="n">Border Style</div><div class="c"></div><div class="v" style="letter-spacing:0.3px">0-None</div></div>
<div class="row" style="top:673px;height:3px"><div class="a" style="left:0;top:0;width:185px;height:18px;background:#f5f5f5"></div><div class="n"></div><div class="c"></div><div class="v"></div></div>
<div class="a" style="left:1084px;top:675px;width:19px;height:1px;background:#000"></div>
<div class="a" style="left:1261px;top:464px;width:1px;height:212px;background:#fff"></div>
<div class="a" style="left:1262px;top:464px;width:16px;height:212px;background:#f0f0f0"></div>
<div class="a" style="left:1262px;top:564px;width:16px;height:44px;background:#cdcdcd"></div>
<svg style="left:1266px;top:470px" width="8" height="6" viewBox="0 0 8 6"><path d="M0.7 5.3 L4 2 L7.3 5.3" fill="none" stroke="#505050" stroke-width="1.6"/></svg>
<svg style="left:1267px;top:664px" width="8" height="6" viewBox="0 0 8 6"><path d="M0.7 0.7 L4 4 L7.3 0.7" fill="none" stroke="#505050" stroke-width="1.6"/></svg>
<!-- description -->
<div class="a" style="left:882px;top:679px;width:396px;height:59px;background:#f5f5f5;border-top:1px solid #e6e6ea"></div>
<div class="t" style="left:888px;top:685px;font-weight:bold;color:#1e1e1e">Width</div>


<!-- status bar -->
<div class="a" style="left:0;top:738px;width:1280px;height:21px;background:#007acc"></div>
<div class="t" style="left:4px;top:743px;color:#fff;letter-spacing:-0.37px">Record ID</div>
<div class="t" style="left:1103px;top:743px;color:#fff;letter-spacing:-0.57px">5.4.8.24</div>

<svg style="left:1266px;top:745px" width="10" height="10" shape-rendering="crispEdges"><rect x="7" y="1" width="1" height="1" fill="#00579a"/><rect x="5" y="3" width="1" height="1" fill="#00579a"/><rect x="7" y="3" width="1" height="1" fill="#00579a"/><rect x="3" y="5" width="1" height="1" fill="#00579a"/><rect x="5" y="5" width="1" height="1" fill="#00579a"/><rect x="7" y="5" width="1" height="1" fill="#00579a"/><rect x="1" y="7" width="1" height="1" fill="#00579a"/><rect x="3" y="7" width="1" height="1" fill="#00579a"/><rect x="5" y="7" width="1" height="1" fill="#00579a"/><rect x="7" y="7" width="1" height="1" fill="#00579a"/><rect x="8" y="2" width="1" height="1" fill="#a8d8ff"/><rect x="6" y="4" width="1" height="1" fill="#a8d8ff"/><rect x="8" y="4" width="1" height="1" fill="#a8d8ff"/><rect x="4" y="6" width="1" height="1" fill="#a8d8ff"/><rect x="6" y="6" width="1" height="1" fill="#a8d8ff"/><rect x="8" y="6" width="1" height="1" fill="#a8d8ff"/><rect x="2" y="8" width="1" height="1" fill="#a8d8ff"/><rect x="4" y="8" width="1" height="1" fill="#a8d8ff"/><rect x="6" y="8" width="1" height="1" fill="#a8d8ff"/><rect x="8" y="8" width="1" height="1" fill="#a8d8ff"/></svg>
</body></html>
